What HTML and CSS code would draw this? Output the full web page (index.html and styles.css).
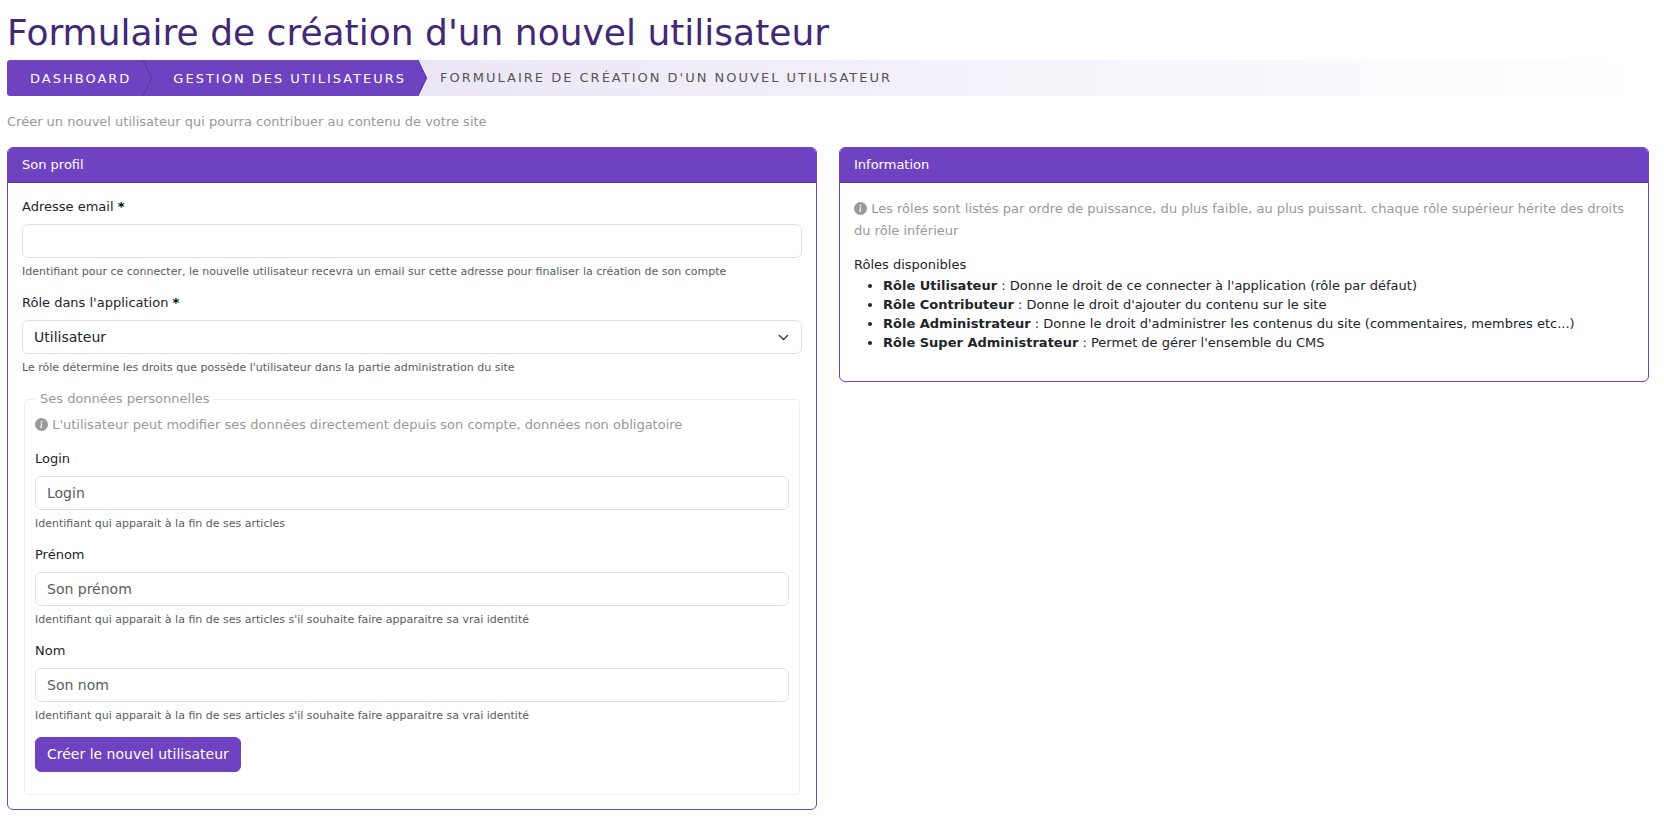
FILE: index.html
```html
<!DOCTYPE html>
<html lang="fr">
<head>
<meta charset="utf-8">
<meta name="viewport" content="width=device-width, initial-scale=1">
<title>Formulaire de création d'un nouvel utilisateur</title>
<link rel="stylesheet" href="styles.css">
</head>
<body>
<svg class="sprite" aria-hidden="true">
  <symbol id="info" viewBox="0 0 16 16">
    <path fill-rule="evenodd" d="M8 16A8 8 0 1 0 8 0a8 8 0 0 0 0 16zm.93-9.412-1 4.705c-.07.34.029.533.304.533.194 0 .487-.07.686-.246l-.088.416c-.287.346-.92.598-1.465.598-.703 0-1.002-.422-.808-1.319l.738-3.468c.064-.293.006-.399-.287-.47l-.451-.081.082-.381 2.29-.287zM8 5.5a1 1 0 1 1 0-2 1 1 0 0 1 0 2z"/>
  </symbol>
  <symbol id="arrow" viewBox="0 0 9 36">
    <path class="arrow-fill" d="M0 0L9 18L0 36z"/>
    <path class="arrow-line" d="M0 0L8.500 18L0 36"/>
  </symbol>
</svg>
<main class="page">
  <h1 class="title">Formulaire de création d'un nouvel utilisateur</h1>
  <nav aria-label="Fil d'Ariane">
    <ol class="crumbs">
      <li class="crumb crumb-first"><a class="crumb-link" href="#">Dashboard</a><svg class="arrow" aria-hidden="true"><use href="#arrow"/></svg></li>
      <li class="crumb"><a class="crumb-link" href="#">Gestion des utilisateurs</a><svg class="arrow" aria-hidden="true"><use href="#arrow"/></svg></li>
      <li class="crumb crumb-current" aria-current="page">Formulaire de création d'un nouvel utilisateur</li>
    </ol>
  </nav>
  <p class="note intro">Créer un nouvel utilisateur qui pourra contribuer au contenu de votre site</p>
  <div class="columns">
    <section class="card">
      <h2 class="card-header">Son profil</h2>
      <form class="card-body">
        <div class="field">
          <label class="label" for="email">Adresse email <strong class="required">*</strong></label>
          <input class="control" type="email" id="email" aria-describedby="email-help">
          <div class="help" id="email-help">Identifiant pour ce connecter, le nouvelle utilisateur recevra un email sur cette adresse pour finaliser la création de son compte</div>
        </div>
        <div class="field">
          <label class="label" for="role">Rôle dans l'application <strong class="required">*</strong></label>
          <div class="select-wrap">
            <select class="control select" id="role" aria-describedby="role-help">
              <option>Utilisateur</option>
              <option>Contributeur</option>
              <option>Administrateur</option>
              <option>Super Administrateur</option>
            </select>
            <svg class="chevron" viewBox="0 0 16 16" aria-hidden="true"><path d="m2 5 6 6 6-6"/></svg>
          </div>
          <div class="help" id="role-help">Le rôle détermine les droits que possède l'utilisateur dans la partie administration du site</div>
        </div>
        <fieldset class="personal">
          <legend class="note legend">Ses données personnelles</legend>
          <p class="note"><svg class="info" aria-hidden="true"><use href="#info"/></svg> L'utilisateur peut modifier ses données directement depuis son compte, données non obligatoire</p>
          <div class="field">
            <label class="label" for="login">Login</label>
            <input class="control" type="text" id="login" placeholder="Login" aria-describedby="login-help">
            <div class="help" id="login-help">Identifiant qui apparait à la fin de ses articles</div>
          </div>
          <div class="field">
            <label class="label" for="firstname">Prénom</label>
            <input class="control" type="text" id="firstname" placeholder="Son prénom" aria-describedby="firstname-help">
            <div class="help" id="firstname-help">Identifiant qui apparait à la fin de ses articles s'il souhaite faire apparaitre sa vrai identité</div>
          </div>
          <div class="field">
            <label class="label" for="lastname">Nom</label>
            <input class="control" type="text" id="lastname" placeholder="Son nom" aria-describedby="lastname-help">
            <div class="help" id="lastname-help">Identifiant qui apparait à la fin de ses articles s'il souhaite faire apparaitre sa vrai identité</div>
          </div>
          <button class="button" type="submit">Créer le nouvel utilisateur</button>
        </fieldset>
      </form>
    </section>
    <section class="card">
      <h2 class="card-header">Information</h2>
      <div class="card-body card-info">
        <p class="note"><svg class="info" aria-hidden="true"><use href="#info"/></svg> Les rôles sont listés par ordre de puissance, du plus faible, au plus puissant. chaque rôle supérieur hérite des droits du rôle inférieur</p>
        <div>Rôles disponibles</div>
        <ul class="roles">
          <li><strong>Rôle Utilisateur</strong> : Donne le droit de ce connecter à l'application (rôle par défaut)</li>
          <li><strong>Rôle Contributeur</strong> : Donne le droit d'ajouter du contenu sur le site</li>
          <li><strong>Rôle Administrateur</strong> : Donne le droit d'administrer les contenus du site (commentaires, membres etc...)</li>
          <li><strong>Rôle Super Administrateur</strong> : Permet de gérer l'ensemble du CMS</li>
        </ul>
      </div>
    </section>
  </div>
</main>
</body>
</html>
```
FILE: styles.css
```css
:root {
  --purple: #6f42c1;
  --purple-dark: #59359a;
  --ink: #212529;
  --muted: #999;
  --border: #dee2e6;
}

* {
  box-sizing: border-box;
}

body {
  margin: 0;
  background: #fff;
  color: var(--ink);
  font-family: Verdana, "DejaVu Sans", sans-serif;
  font-size: 13px;
  line-height: 20px;
}

.sprite {
  display: none;
}

.page {
  padding: 9px 15px 15px 7px;
}

.title {
  margin: 0 0 3px;
  color: #432874;
  font-size: 36px;
  font-weight: 400;
  line-height: 48px;
}

.crumbs {
  display: flex;
  margin: 0;
  padding: 0;
  list-style: none;
  overflow: hidden;
  border-radius: 4px;
  background: linear-gradient(90deg, #e5def3, #fff);
  line-height: 36px;
  letter-spacing: 2px;
  text-transform: uppercase;
}

.crumb {
  display: flex;
}

.crumb-first {
  background: var(--purple);
}

.crumb-link {
  padding: 1px 12px 0 21px;
  background: var(--purple);
  color: #fff;
  line-height: 35px;
  text-decoration: none;
}

.crumb-first .crumb-link {
  padding-left: 23px;
}

.crumb-current {
  padding-left: 13px;
  color: #555;
}

.arrow {
  width: 9px;
  height: 36px;
}

.arrow-fill {
  fill: var(--purple);
}

.arrow-line {
  fill: none;
  stroke: var(--purple-dark);
}

.note {
  margin: 0 0 13px;
  color: var(--muted);
  line-height: 22px;
}

.intro {
  margin: 15px 0 14px;
}

.columns {
  display: grid;
  grid-template-columns: 1fr 1fr;
  align-items: start;
  gap: 22px;
}

.card {
  border: 1px solid var(--purple);
  border-radius: 6px;
  overflow: hidden;
}

.card-header {
  margin: 0;
  padding: 7px 14px;
  border-bottom: 1px solid var(--purple-dark);
  background: var(--purple);
  color: #fff;
  font-size: 13px;
  font-weight: 400;
  line-height: 20px;
}

.card-body {
  padding: 14px;
}

.card-info {
  padding-top: 15px;
  padding-bottom: 29px;
}

.field {
  margin-bottom: 12px;
}

.label {
  display: block;
  margin-bottom: 7px;
}

.required {
  color: #000;
}

.control {
  display: block;
  width: 100%;
  height: 34px;
  padding: 0 11px;
  border: 1px solid var(--border);
  border-radius: 6px;
  background: #fff;
  color: var(--ink);
  font-family: inherit;
  font-size: 14px;
}

.control::placeholder {
  color: #595c5f;
  opacity: 1;
}

.select-wrap {
  display: grid;
  align-items: center;
}

.select {
  grid-area: 1 / 1;
  appearance: none;
}

.chevron {
  grid-area: 1 / 1;
  justify-self: end;
  width: 11px;
  height: 11px;
  margin-right: 13px;
  fill: none;
  stroke: #343a40;
  stroke-width: 2;
  stroke-linecap: round;
  stroke-linejoin: round;
  pointer-events: none;
}

.help {
  margin-top: 5px;
  color: #595c5f;
  font-size: 11px;
  line-height: 18px;
}

.personal {
  margin: 0 2px;
  padding: 5px 10px 22px;
  border: 1px solid #eee;
  border-radius: 5px;
}

.legend {
  margin: 0;
  padding: 0 5px;
  line-height: 20px;
}

.info {
  width: 13px;
  height: 13px;
  fill: currentColor;
  vertical-align: -2px;
}

.button {
  display: block;
  padding: 7px 11px;
  border: 1px solid var(--purple);
  border-radius: 6px;
  background: var(--purple);
  color: #fff;
  font-family: inherit;
  font-size: 14px;
  line-height: 19px;
}

.roles {
  margin: 1px 0 0;
  padding-left: 29px;
  line-height: 19px;
}
```
